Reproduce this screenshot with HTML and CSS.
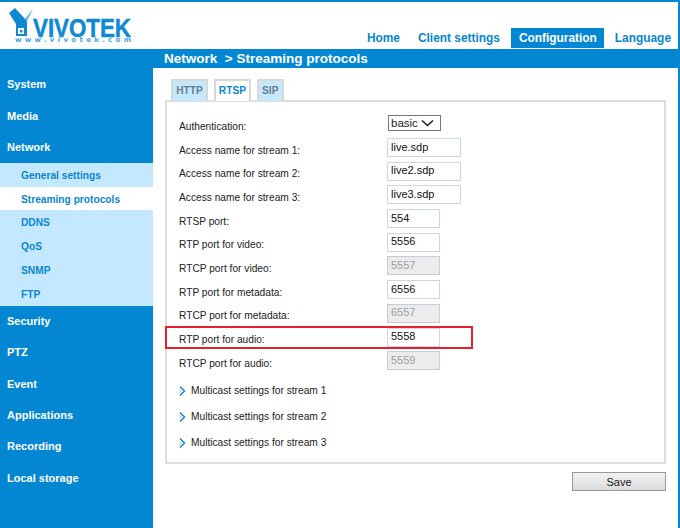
FILE: index.html
```html
<!DOCTYPE html>
<html lang="en">
<head>
<meta charset="utf-8">
<title>Streaming protocols</title>
<link rel="stylesheet" href="styles.css">
</head>
<body>
<div class="page">
  <header class="top">
    <svg class="logo" width="126" height="40" viewBox="0 0 126 40">
      <path d="M1 9 L7 4 L19 17 L19 32 L8 32 L8 20 Z" fill="#0f8ad2"/>
      <path d="M17 15 L25 5 L19 17 Z" fill="#5cb2e4"/>
      <rect x="10" y="24" width="6" height="6" fill="#fff"/>
      <rect x="12" y="26" width="2.5" height="2.5" fill="#0f8ad2"/>
      <text class="logo-name" x="25" y="33" textLength="98" lengthAdjust="spacingAndGlyphs">VIVOTEK</text>
      <text class="logo-url" x="7" y="38" textLength="116" lengthAdjust="spacing">www.vivotek.com</text>
    </svg>
    <nav class="topnav">
      <a class="topnav-item">Home</a>
      <a class="topnav-item">Client settings</a>
      <a class="topnav-item topnav-active">Configuration</a>
      <a class="topnav-item">Language</a>
    </nav>
  </header>
  <div class="titlebar">Network&nbsp; &gt; Streaming protocols</div>
  <div class="body">
    <aside class="side">
      <div class="side-item">System</div>
      <div class="side-item">Media</div>
      <div class="side-item">Network</div>
      <div class="sub">
        <div class="sub-item">General settings</div>
        <div class="sub-item sub-active">Streaming protocols</div>
        <div class="sub-item">DDNS</div>
        <div class="sub-item">QoS</div>
        <div class="sub-item">SNMP</div>
        <div class="sub-item">FTP</div>
      </div>
      <div class="side-item">Security</div>
      <div class="side-item">PTZ</div>
      <div class="side-item">Event</div>
      <div class="side-item">Applications</div>
      <div class="side-item">Recording</div>
      <div class="side-item">Local storage</div>
    </aside>
    <main class="main">
      <div class="tabs">
        <div class="tab">HTTP</div>
        <div class="tab tab-active">RTSP</div>
        <div class="tab">SIP</div>
      </div>
      <section class="panel">
        <div class="row"><label>Authentication:</label><div class="fake-select"><span>basic</span><svg width="13" height="8" viewBox="0 0 13 8"><path d="M1 1.5 L6.5 6.5 L12 1.5" fill="none" stroke="#222" stroke-width="1.6"/></svg></div></div>
        <div class="row"><label>Access name for stream 1:</label><input class="field wide" value="live.sdp"></div>
        <div class="row"><label>Access name for stream 2:</label><input class="field wide" value="live2.sdp"></div>
        <div class="row"><label>Access name for stream 3:</label><input class="field wide" value="live3.sdp"></div>
        <div class="row"><label>RTSP port:</label><input class="field" value="554"></div>
        <div class="row"><label>RTP port for video:</label><input class="field" value="5556"></div>
        <div class="row"><label>RTCP port for video:</label><input class="field" value="5557" disabled></div>
        <div class="row"><label>RTP port for metadata:</label><input class="field" value="6556"></div>
        <div class="row"><label>RTCP port for metadata:</label><input class="field" value="6557" disabled></div>
        <div class="row"><label>RTP port for audio:</label><input class="field" value="5558"><span class="marker"></span></div>
        <div class="row"><label>RTCP port for audio:</label><input class="field" value="5559" disabled></div>
        <div class="multi">
          <div class="multi-row"><svg width="7" height="10" viewBox="0 0 7 10"><path d="M1 .5 L5.5 5 L1 9.5" fill="none" stroke="#1f86c6" stroke-width="1.5"/><path d="M.5 3 L2.5 5 L.5 7" fill="none" stroke="#8fcbef" stroke-width="1"/></svg>Multicast settings for stream 1</div>
          <div class="multi-row"><svg width="7" height="10" viewBox="0 0 7 10"><path d="M1 .5 L5.5 5 L1 9.5" fill="none" stroke="#1f86c6" stroke-width="1.5"/><path d="M.5 3 L2.5 5 L.5 7" fill="none" stroke="#8fcbef" stroke-width="1"/></svg>Multicast settings for stream 2</div>
          <div class="multi-row"><svg width="7" height="10" viewBox="0 0 7 10"><path d="M1 .5 L5.5 5 L1 9.5" fill="none" stroke="#1f86c6" stroke-width="1.5"/><path d="M.5 3 L2.5 5 L.5 7" fill="none" stroke="#8fcbef" stroke-width="1"/></svg>Multicast settings for stream 3</div>
        </div>
      </section>
      <div class="actions"><button class="save">Save</button></div>
    </main>
  </div>
</div>
</body>
</html>
```
FILE: styles.css
```css
* { box-sizing: border-box; }
html, body { margin: 0; height: 100%; overflow: hidden; }
body { font-family: "Liberation Sans", Arial, sans-serif; background: #fff; }
.page {
  width: 680px; height: 528px;
  border-top: 2px solid #0487d3;
  border-right: 2px solid #0487d3;
  display: flex; flex-direction: column;
}
.top { height: 46px; display: flex; justify-content: space-between; align-items: flex-end; flex: none; }
.logo { margin: 0 0 4px 8px; flex: none; overflow: visible; }
.logo-name { font: 700 25px "Liberation Sans", Arial, sans-serif; fill: #0f8ad2; stroke: #0f8ad2; stroke-width: .5px; }
.logo-url { font: 700 7px "DejaVu Sans", sans-serif; fill: #4aa6de; }
.topnav { display: flex; align-items: flex-end; height: 20px; }
.topnav-item { font-size: 11.9px; font-weight: 700; color: #0a86d0; height: 20px; line-height: 21px; padding: 0 9px; }
.topnav-active { background: #0487d3; color: #fff; padding: 0 7px 0 8px; margin: 0 2px; }
.topnav-item:last-child { padding-right: 7px; }
.titlebar {
  margin-top: 1px; height: 19px; background: #0487d3; color: #fff;
  font-size: 13.5px; font-weight: 700; line-height: 19px; padding-left: 164px; flex: none;
}
.body { flex: 1; display: flex; min-height: 0; }
.side { width: 153px; background: #0487d3; flex: none; padding-top: 1px; }
.side-item { height: 31.3px; line-height: 31.3px; padding: .4px 0 0 7px; font-size: 11px; font-weight: 700; color: #fff; }
.sub { background: #c4e8ff; }
.sub-item { height: 23.8px; line-height: 23.8px; padding: 1px 0 0 21px; font-size: 10.2px; font-weight: 700; color: #0a86d0; }
.sub-active { background: #fff; }
.main { width: 525px; padding: 11px 0 0 12px; }
.tabs { display: flex; gap: 5.5px; padding-left: 6px; height: 21px; }
.tab {
  height: 22px; padding: 0 3.25px; background: #c4e8ff; border: 2px solid #d8d8d4; border-bottom: 0;
  font-size: 10.2px; font-weight: 700; line-height: 20px; color: #6a7c88; position: relative; z-index: 1;
}
.tab-active { background: #fff; color: #0a86d0; }
.panel {
  width: 501px; height: 364px; border: 2px solid #dfdfda; padding: 10px 12px 0 12px; background: #fff;
}
.row { height: 23.7px; display: flex; align-items: center; position: relative; }
.row label { width: 208px; font-size: 10.2px; color: #222; padding-top: 5px; }
.field {
  width: 53px; height: 19px; border: 1px solid #cdd6e4; background: #fff; padding: 0 2px 2px 3px;
  font: 11px "Liberation Sans", Arial, sans-serif; color: #111; outline: none;
}
.field.wide { width: 74px; }
.field:disabled { background: #ececec; color: #a0a0a0; border-color: #c6cdd6; }
.fake-select {
  width: 53px; height: 16px; border: 1px solid #777; background: #fff;
  display: flex; justify-content: space-between; align-items: center; padding: 0 6px 0 2px;
  font-size: 11.5px; color: #222; margin: -2px 0 0 1px;
}
.marker { position: absolute; left: -14px; top: 1px; width: 308px; height: 23px; border: 2px solid #e81f2d; pointer-events: none; }
.multi { margin-top: 5px; }
.multi-row { height: 26px; display: flex; align-items: center; font-size: 10.2px; color: #222; gap: 5px; }
.actions { width: 501px; display: flex; justify-content: flex-end; padding-top: 8px; }
.save {
  width: 94px; height: 19px; border: 1px solid #999; background: linear-gradient(#f2f2f2, #dcdcdc);
  font: 11px "Liberation Sans", Arial, sans-serif; color: #222; padding: 0;
}
```
